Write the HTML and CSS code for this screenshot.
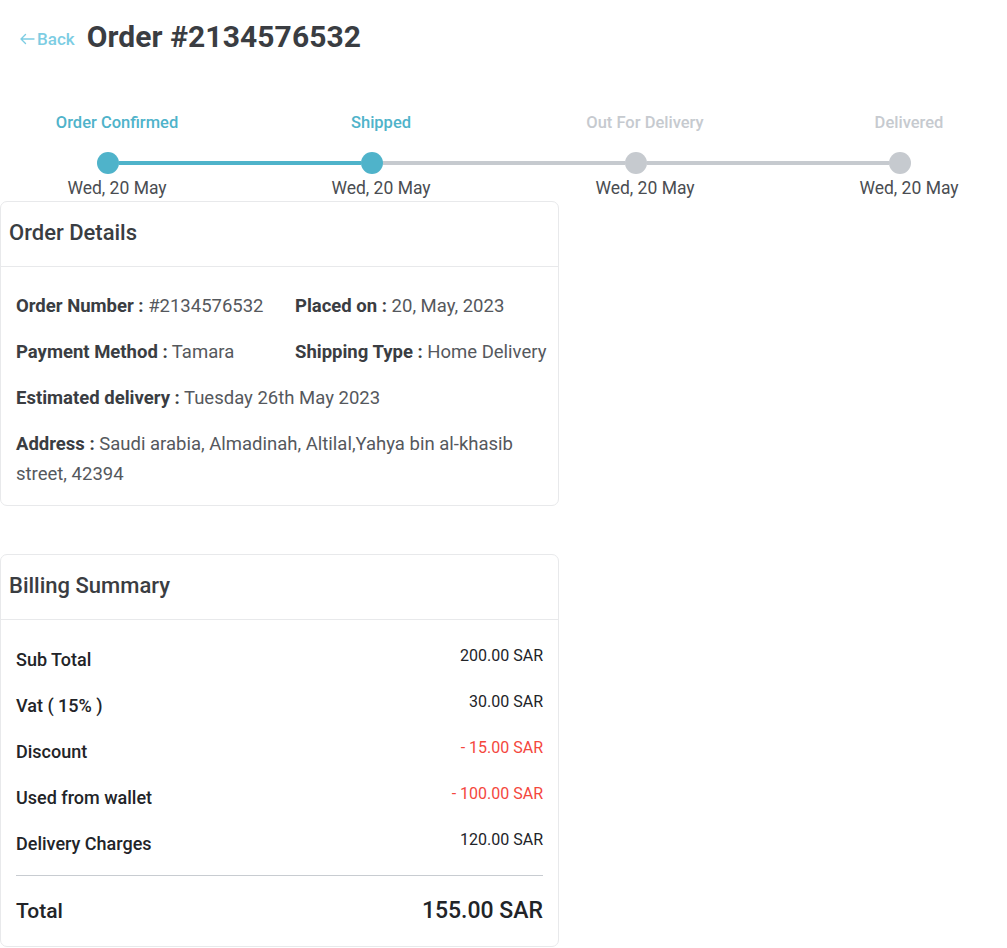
FILE: index.html
```html
<!DOCTYPE html>
<html>
<head>
<meta charset="utf-8">
<link rel="stylesheet" href="styles.css">
</head>
<body>
<div class="page">
  <header class="topbar">
    <a class="back" href="#"><svg class="back-arrow" width="16" height="12" viewBox="0 0 16 12"><path d="M15 6H2M6.5 1.5L2 6l4.5 4.5" fill="none" stroke="currentColor" stroke-width="1.4" stroke-linecap="round" stroke-linejoin="round"/></svg>Back</a>
    <h1 class="title">Order #2134576532</h1>
  </header>

  <section class="stepper">
    <div class="step-labels">
      <span class="step-label active">Order Confirmed</span>
      <span class="step-label active">Shipped</span>
      <span class="step-label">Out For Delivery</span>
      <span class="step-label">Delivered</span>
    </div>
    <div class="track">
      <span class="dot active"></span>
      <span class="bar active"></span>
      <span class="dot active"></span>
      <span class="bar"></span>
      <span class="dot"></span>
      <span class="bar"></span>
      <span class="dot"></span>
    </div>
    <div class="step-labels dates">
      <span class="step-date">Wed, 20 May</span>
      <span class="step-date">Wed, 20 May</span>
      <span class="step-date">Wed, 20 May</span>
      <span class="step-date">Wed, 20 May</span>
    </div>
  </section>

  <section class="card details">
    <h2 class="card-title">Order Details</h2>
    <div class="card-body">
      <div class="info-row">
        <p class="info col1"><b>Order Number :</b> #2134576532</p>
        <p class="info"><b>Placed on :</b> 20, May, 2023</p>
      </div>
      <div class="info-row">
        <p class="info col1"><b>Payment Method :</b> Tamara</p>
        <p class="info"><b>Shipping Type :</b> Home Delivery</p>
      </div>
      <p class="info"><b>Estimated delivery :</b> Tuesday 26th May 2023</p>
      <p class="info address"><b>Address :</b> Saudi arabia, Almadinah, Altilal,Yahya bin al-khasib street, 42394</p>
    </div>
  </section>

  <section class="card billing">
    <h2 class="card-title">Billing Summary</h2>
    <div class="card-body bill-body">
      <div class="bill-row"><span class="bill-label">Sub Total</span><span class="bill-value">200.00 SAR</span></div>
      <div class="bill-row"><span class="bill-label">Vat ( 15% )</span><span class="bill-value">30.00 SAR</span></div>
      <div class="bill-row"><span class="bill-label">Discount</span><span class="bill-value neg">- 15.00 SAR</span></div>
      <div class="bill-row"><span class="bill-label">Used from wallet</span><span class="bill-value neg">- 100.00 SAR</span></div>
      <div class="bill-row"><span class="bill-label">Delivery Charges</span><span class="bill-value">120.00 SAR</span></div>
      <div class="total-row"><span class="total-label">Total</span><span class="total-value">155.00 SAR</span></div>
    </div>
  </section>
</div>
</body>
</html>
```

FILE: styles.css
```css
* { box-sizing: border-box; }
html, body { margin: 0; padding: 0; background: #fff; }
body {
  font-family: Roboto, "Liberation Sans", sans-serif;
  color: #3b3e43;
}
.page { width: 1007px; }

.topbar {
  display: flex;
  align-items: center;
  gap: 12px;
  padding: 19px 0 0 19px;
  height: 56px;
}
.back {
  display: flex;
  align-items: center;
  gap: 2px;
  color: #7dcde3;
  text-decoration: none;
  font-size: 17px;
  font-weight: 500;
  margin-top: 2px;
}
.back-arrow { display: block; }
.title {
  margin: 0;
  margin-top: -2px;
  font-size: 30px;
  font-weight: 700;
  color: #3a3d42;
  letter-spacing: 0.1px;
}

.stepper { padding-top: 57px; }
.step-labels {
  display: grid;
  grid-template-columns: repeat(4, 200px);
  column-gap: 64px;
  padding-left: 17px;
}
.step-label {
  text-align: center;
  font-size: 16.5px;
  font-weight: 500;
  color: #c6cacf;
  line-height: 20px;
}
.step-label.active { color: #4fb3ca; }
.track {
  display: flex;
  align-items: center;
  padding-left: 97px;
  margin-top: 19px;
  height: 22px;
}
.dot {
  width: 22px;
  height: 22px;
  border-radius: 50%;
  background: #c6cacf;
  flex: none;
}
.dot.active { background: #4fb3ca; }
.bar {
  width: 242px;
  height: 4px;
  background: #c6cacf;
  flex: none;
}
.bar.active { background: #4fb3ca; }
.dates { margin-top: 4px; }
.step-date {
  text-align: center;
  font-size: 17.5px;
  color: #4a4d52;
  line-height: 20px;
}

.card {
  width: 559px;
  border: 1px solid #e8e9eb;
  border-radius: 7px;
  background: #fff;
}
.details { margin-top: 3px; }
.billing { margin-top: 48px; }
.card-title {
  margin: 0;
  padding: 0 8px 4px;
  height: 65px;
  display: flex;
  align-items: center;
  font-size: 22px;
  font-weight: 500;
  color: #3a3d42;
  border-bottom: 1px solid #e8e9eb;
}
.card-body { padding: 24px 8px 16px 15px; }
.info-row { display: flex; }
.info {
  margin: 0 0 16px;
  font-size: 18.5px;
  line-height: 30px;
  color: #55585d;
}
.info b { color: #3a3d42; font-weight: 700; }
.col1 { width: 279px; flex: none; white-space: nowrap; }
.address { margin-bottom: 0; }

.bill-body { padding: 28px 15px 15px 15px; }
.bill-row {
  display: flex;
  justify-content: space-between;
  align-items: flex-start;
  height: 46px;
}
.bill-label {
  font-size: 18px;
  font-weight: 500;
  color: #222428;
  line-height: 24px;
}
.bill-value {
  font-size: 16px;
  color: #222428;
  line-height: 16px;
}
.bill-value.neg { color: #f4473d; }
.total-row {
  display: flex;
  justify-content: space-between;
  align-items: flex-start;
  border-top: 1px solid #c8ccd1;
  margin-top: -3px;
  padding-top: 18px;
  height: 56px;
}
.total-label {
  font-size: 21px;
  font-weight: 500;
  color: #222428;
  line-height: 34px;
}
.total-value {
  font-size: 23px;
  font-weight: 500;
  color: #222428;
  line-height: 34px;
}
```
